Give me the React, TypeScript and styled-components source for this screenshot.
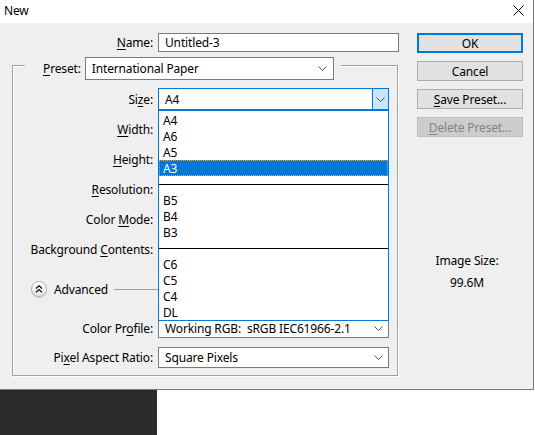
import React from 'react';
import styled, { createGlobalStyle } from 'styled-components';

const GlobalStyle = createGlobalStyle`
  html, body {
    margin: 0;
    padding: 0;
    background: #ffffff;
  }
  body {
    font-family: "Segoe UI", "Noto Sans", "Liberation Sans", sans-serif;
    font-size: 12px;
    letter-spacing: -0.15px;
    color: #000;
  }
`;

const Page = styled.div`
  width: 535px;
  height: 435px;
  overflow: hidden;
  background: #fff;
`;

const Dialog = styled.div`
  width: 534px;
  height: 390px;
  box-sizing: border-box;
  border-right: 1px solid #7a7a7a;
  border-bottom: 1px solid #7a7a7a;
  background: #efefef;
  display: flex;
  flex-direction: column;
`;

const TitleBar = styled.div`
  height: 23px;
  box-sizing: border-box;
  background: #fff;
  display: flex;
  align-items: center;
  justify-content: space-between;
  padding: 0 9px 2px 4px;
`;

const Title = styled.span`
  font-size: 12px;
`;

const Body = styled.div`
  flex: 1;
  display: flex;
  padding-top: 10px;
`;

const Main = styled.div`
  width: 400px;
  display: flex;
  flex-direction: column;
`;

const Row = styled.div<{ $h: number; $mt?: number }>`
  display: flex;
  align-items: center;
  height: ${p => p.$h}px;
  margin-top: ${p => p.$mt ?? 0}px;
  position: relative;
`;

const Label = styled.label<{ $w: number }>`
  width: ${p => p.$w}px;
  padding-right: 5px;
  text-align: right;
  flex-shrink: 0;
  white-space: nowrap;
  u {
    text-decoration: underline;
    text-underline-offset: 2px;
  }
`;

const LegendLabel = styled.span`
  white-space: nowrap;
  u {
    text-underline-offset: 2px;
  }
`;

const TextInput = styled.div<{ $w: number }>`
  width: ${p => p.$w}px;
  height: 100%;
  box-sizing: border-box;
  border: 1px solid #7a7a7a;
  background: #fff;
  display: flex;
  align-items: center;
  padding-left: 6px;
`;

const Group = styled.div`
  margin: 13px 0 0 12px;
  width: 386px;
  height: 311px;
  box-sizing: border-box;
  border: 1px solid #a0a0a0;
  box-shadow: inset 1px 1px 0 #fff, 1px 1px 0 #fff;
  display: flex;
  flex-direction: column;
`;

const Legend = styled.div`
  align-self: flex-start;
  margin: -9px 0 0 12px;
  padding: 0 7px 0 18px;
  height: 23px;
  display: flex;
  align-items: center;
  gap: 4px;
  background: #efefef;
`;

const Select = styled.div<{ $w: number; $open?: boolean }>`
  width: ${p => p.$w}px;
  height: 100%;
  box-sizing: border-box;
  border: 1px solid ${p => (p.$open ? '#0078d7' : '#7a7a7a')};
  background: #fff;
  display: flex;
  align-items: center;
  justify-content: space-between;
  padding-left: 6px;
  position: relative;
`;

const Chevron = styled.span<{ $open?: boolean }>`
  width: ${p => (p.$open ? 16 : 20)}px;
  height: 100%;
  display: flex;
  align-items: center;
  justify-content: center;
  box-sizing: border-box;
  background: ${p => (p.$open ? '#cce4f7' : 'transparent')};
  border-left: ${p => (p.$open ? '1px solid #0078d7' : 'none')};
`;

const DropList = styled.div`
  position: absolute;
  top: calc(100% + 1px);
  left: -1px;
  right: -1px;
  box-sizing: border-box;
  border: 1px solid #0078d7;
  padding-top: 1px;
  background: #fff;
  z-index: 5;
`;

const Item = styled.div<{ $active?: boolean }>`
  height: 16px;
  box-sizing: border-box;
  padding: 1px 0 0 4px;
  line-height: 16px;
  background: ${p => (p.$active ? '#0078d7' : '#fff')};
  color: ${p => (p.$active ? '#fff' : '#000')};
  outline: ${p => (p.$active ? '1px dotted #ff9c3a' : 'none')};
  outline-offset: -1px;
`;

const Separator = styled.div`
  height: 16px;
  display: flex;
  align-items: center;
  &::after {
    content: '';
    flex: 1;
    height: 1px;
    background: #000;
  }
`;

const AdvancedRow = styled.div`
  height: 50px;
  display: flex;
  align-items: center;
  padding: 0 8px 0 18px;
`;

const RoundButton = styled.span`
  width: 16px;
  height: 16px;
  box-sizing: border-box;
  border-radius: 50%;
  border: 1px solid #b4b4b4;
  background: linear-gradient(#ffffff, #e8e8e8);
  box-shadow: 0 1px 1px rgba(0, 0, 0, 0.15);
  display: flex;
  align-items: center;
  justify-content: center;
  margin-right: 7px;
`;

const Rule = styled.span`
  flex: 1;
  height: 1px;
  background: #a0a0a0;
  margin-left: 6px;
`;

const Side = styled.div`
  margin-left: 17px;
  width: 106px;
  display: flex;
  flex-direction: column;
  gap: 8px;
`;

const Button = styled.div<{ $primary?: boolean; $disabled?: boolean }>`
  height: 20px;
  box-sizing: border-box;
  border: ${p => (p.$primary ? '2px solid #0078d7' : '1px solid #adadad')};
  background: ${p => (p.$disabled ? '#cccccc' : '#e1e1e1')};
  color: ${p => (p.$disabled ? '#838383' : '#000')};
  border-color: ${p => (p.$disabled ? '#bfbfbf' : undefined)};
  display: flex;
  align-items: center;
  justify-content: center;
  u {
    text-underline-offset: 2px;
  }
`;

const Info = styled.div<{ $mt: number }>`
  margin-top: ${p => p.$mt}px;
  text-align: center;
  padding-right: 6px;
`;

const Footer = styled.div`
  flex: 1;
  height: 45px;
  display: flex;
`;

const DarkStrip = styled.div`
  width: 157px;
  background: #2b2b2b;
`;

const ChevronDown = () => (
  <svg width="9" height="5" viewBox="0 0 9 5">
    <polyline points="0.5,0.5 4.5,4.5 8.5,0.5" fill="none" stroke="#555" strokeWidth="1" />
  </svg>
);

const CloseIcon = () => (
  <svg width="11" height="11" viewBox="0 0 11 11">
    <path d="M0.5 0.5 L10.5 10.5 M10.5 0.5 L0.5 10.5" stroke="#000" strokeWidth="1" />
  </svg>
);

const DoubleUp = () => (
  <svg width="8" height="8" viewBox="0 0 8 8">
    <polyline points="1,3.5 4,0.8 7,3.5" fill="none" stroke="#111" strokeWidth="1.3" />
    <polyline points="1,7.2 4,4.5 7,7.2" fill="none" stroke="#111" strokeWidth="1.3" />
  </svg>
);

type Entry = { label?: string; sep?: boolean; active?: boolean };

const sizes: Entry[] = [
  { label: 'A4' },
  { label: 'A6' },
  { label: 'A5' },
  { label: 'A3', active: true },
  { sep: true },
  { label: 'B5' },
  { label: 'B4' },
  { label: 'B3' },
  { sep: true },
  { label: 'C6' },
  { label: 'C5' },
  { label: 'C4' },
  { label: 'DL' },
];

const hiddenRows: React.ReactNode[] = [
  <><u>W</u>idth:</>,
  <><u>H</u>eight:</>,
  <><u>R</u>esolution:</>,
  <>Color <u>M</u>ode:</>,
  <>Background <u>C</u>ontents:</>,
];

export default function App() {
  return (
    <Page>
      <GlobalStyle />
      <Dialog>
        <TitleBar>
          <Title>New</Title>
          <CloseIcon />
        </TitleBar>
        <Body>
          <Main>
            <Row $h={19}>
              <Label $w={153}><u>N</u>ame:</Label>
              <TextInput $w={241}>Untitled-3</TextInput>
            </Row>
            <Group>
              <Legend>
                <LegendLabel><u>P</u>reset:</LegendLabel>
                <Select $w={249}>
                  International Paper
                  <Chevron><ChevronDown /></Chevron>
                </Select>
              </Legend>
              <Row $h={22} $mt={8}>
                <Label $w={140}>Si<u>z</u>e:</Label>
                <Select $w={231} $open>
                  A4
                  <Chevron $open><ChevronDown /></Chevron>
                  <DropList>
                    {sizes.map((s, i) =>
                      s.sep ? <Separator key={i} /> : <Item key={i} $active={s.active}>{s.label}</Item>
                    )}
                  </DropList>
                </Select>
              </Row>
              {hiddenRows.map((l, i) => (
                <Row key={i} $h={30} $mt={i === 0 ? 4 : 0}>
                  <Label $w={140}>{l}</Label>
                </Row>
              ))}
              <AdvancedRow>
                <RoundButton><DoubleUp /></RoundButton>
                Advanced
                <Rule />
              </AdvancedRow>
              <Row $h={20} $mt={4}>
                <Label $w={140}>Color Pr<u>o</u>file:</Label>
                <Select $w={231}>
                  Working RGB:&nbsp; sRGB IEC61966-2.1
                  <Chevron><ChevronDown /></Chevron>
                </Select>
              </Row>
              <Row $h={21} $mt={9}>
                <Label $w={140}>Pi<u>x</u>el Aspect Ratio:</Label>
                <Select $w={231}>
                  Square Pixels
                  <Chevron><ChevronDown /></Chevron>
                </Select>
              </Row>
            </Group>
          </Main>
          <Side>
            <Button $primary>OK</Button>
            <Button>Cancel</Button>
            <Button><u>S</u>ave Preset...</Button>
            <Button $disabled><u>D</u>elete Preset...</Button>
            <Info $mt={107}>Image Size:</Info>
            <Info $mt={-3}>99.6M</Info>
          </Side>
        </Body>
      </Dialog>
      <Footer>
        <DarkStrip />
      </Footer>
    </Page>
  );
}
